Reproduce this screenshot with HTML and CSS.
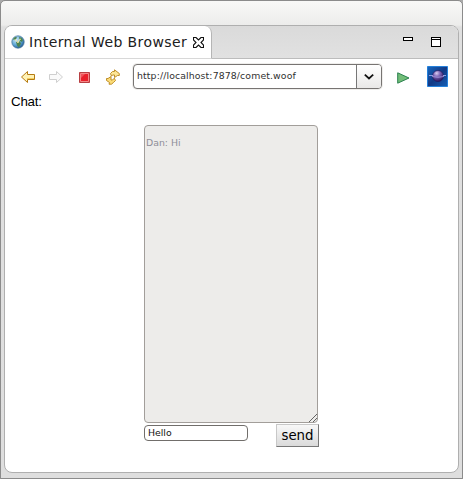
FILE: index.html
```html
<!DOCTYPE html>
<html lang="en">
<head>
<meta charset="utf-8">
<title>Internal Web Browser</title>
<link rel="stylesheet" href="styles.css">
</head>
<body>
<div class="window">
  <main class="panel">
    <header class="tabbar">
      <div class="tab">
        <svg class="globe" width="14" height="14" viewBox="0 0 14 14"><defs><radialGradient id="g" cx=".35" cy=".3" r=".75"><stop offset="0" stop-color="#d3ebf7"/><stop offset=".6" stop-color="#5ba5d4"/><stop offset="1" stop-color="#20578f"/></radialGradient></defs><circle cx="7" cy="7" r="6.200" fill="url(#g)" stroke="#47749a" stroke-width=".7"/><path d="M2 4l2-2 2 .3-1 2-2 1zM8 2l2.500.7L12 5l-1 2-2-1zM5 7l4-.5 1 2-2 4-2-2z" fill="#4d8452"/><path d="M3.500 4.500l2 1L7 8l1-3 2-1" fill="none" stroke="#f2e7a4" stroke-width=".9"/></svg>
        <span class="title">Internal Web Browser</span>
        <svg class="close" width="11" height="11" viewBox="0 0 11 11"><path d="M.5.5h2.500l2.500 2.500L8 .5h2.500v2.500L8 5.500l2.500 2.500v2.500H8L5.500 8 3 10.500H.5V8L3 5.500.5 3z" fill="#fff" stroke="#111" stroke-width="1.100"/></svg>
      </div>
      <div class="controls">
        <span class="minimize"></span>
        <span class="maximize"></span>
      </div>
    </header>
    <nav class="toolbar">
      <svg class="back" width="16" height="14" viewBox="0 0 16 14"><path d="M1.500 7L7.500 1.500V4.500H14.500V9.500H7.500V12.500z" fill="#fff2b5" stroke="#b57b12"/><path d="M7 8.500h7" stroke="#f5cf61"/></svg>
      <svg class="forward" width="16" height="14" viewBox="0 0 16 14"><path d="M14.500 7L8.500 1.500V4.500H1.500V9.500H8.500V12.500z" fill="#fafafa" stroke="#cfcfcf"/></svg>
      <svg class="stop" width="11" height="11" viewBox="0 0 11 11"><path d="M.5.5h10v10H.5z" fill="#e8202a" stroke="#b63f42"/><path d="M1.500 1.500h8v8h-8z" fill="none" stroke="#f48888"/><path d="M2 6l4-4H2z" fill="#ee555c"/></svg>
      <svg class="refresh" width="16" height="16" viewBox="0 0 16 16"><path d="M5.500 4.500L7.500 2.500H9.500V.8L14.300 4.500V6.500H12.500L9.500 8.500V6H7.500L6.500 7.200z" fill="#fde697" stroke="#b8841b" stroke-width=".9"/><path d="M10.500 11.500L8.500 13.500L6.500 15.200H4L4.500 13.500L1.500 11.500V9.500H3L6 7.500V11H7.500L9.300 9.200z" fill="#fbdc78" stroke="#b8841b" stroke-width=".9"/></svg>
      <div class="address"><span class="url">http://localhost:7878/comet.woof</span><span class="drop"><svg width="10" height="6" viewBox="0 0 10 6"><path d="M.8.7L5 4.500 9.200.7" fill="none" stroke="#111" stroke-width="1.8"/></svg></span></div>
      <svg class="go" width="13" height="12" viewBox="0 0 13 12"><path d="M.7.8L12 6 .7 11.200z" fill="#72bd78" stroke="#2c8250"/></svg>
      <svg class="logo" width="21" height="21" viewBox="0 0 21 21"><defs><linearGradient id="b" x1="0" y1="0" x2="1" y2="1"><stop offset="0" stop-color="#1769c0"/><stop offset=".5" stop-color="#123985"/><stop offset="1" stop-color="#1460b6"/></linearGradient><radialGradient id="p" cx=".38" cy=".25" r=".75"><stop offset="0" stop-color="#dacdf0"/><stop offset=".4" stop-color="#8068b8"/><stop offset="1" stop-color="#2b1760"/></radialGradient></defs><path d="M.5.5h20v20H.5z" fill="url(#b)" stroke="#2580da"/><circle cx="11" cy="10" r="5.500" fill="url(#p)" stroke="#241557" stroke-width=".6"/><path d="M2 9.500h4M16 9.500h3" stroke="#8e9ce0"/><path d="M5 10.500q6 1.500 12 0" fill="none" stroke="#a99be0" stroke-width=".8"/></svg>
    </nav>
    <section class="page">
      <div class="label">Chat:</div>
      <div class="chat">
        <div class="log">Dan: Hi<svg class="grip" width="8" height="8" viewBox="0 0 8 8"><path d="M0 8L8 0M4 8l4-4" stroke="#555" stroke-width=".9"/></svg></div>
        <div class="compose">
          <input class="message" type="text" value="Hello">
          <button class="send">send</button>
        </div>
      </div>
    </section>
  </main>
</div>
</body>
</html>
```
FILE: styles.css
```css
* { box-sizing: border-box; }
html { background: #aaa; }
body { margin: 0; font-family: "DejaVu Sans", sans-serif; overflow: hidden; }
svg { display: block; flex: none; }
.window {
  width: 463px; height: 479px;
  padding: 24px 3px 5px;
  border: 1px solid #8b8b8b;
  border-radius: 5px 5px 0 0;
  background: linear-gradient(#f8f8f7, #ececeb 24px, #e0e0e0 26px, #dedede);
}
.panel {
  height: 448px;
  border: 1px solid #afafaf;
  border-radius: 8px;
  background: #fff;
  overflow: hidden;
}
.tabbar {
  display: flex; justify-content: space-between;
  height: 33px;
  border-bottom: 1px solid #bcbcbc;
  background: linear-gradient(#dadada, #e1e1e1);
}
.tab {
  display: flex; align-items: center;
  width: 207px; height: 33px;
  padding-left: 6px;
  border-right: 1px solid #b5b5b5;
  border-bottom: 1px solid #d8d8d8;
  border-radius: 0 7px 0 0;
  background: #fff;
}
.title { width: 158px; margin: 0 6px 0 4px; font-size: 14px; letter-spacing: .4px; line-height: 18px; color: #202020; white-space: nowrap; }
.controls { display: flex; gap: 18px; padding: 11px 17px 0 0; }
.minimize { width: 10px; height: 4px; border: 1px solid #000; background: #fff; }
.maximize { width: 10px; height: 10px; border: 1px solid #000; background: linear-gradient(#fff 1px, #000 1px, #000 2px, #fff 2px); }
.toolbar { display: flex; align-items: center; height: 35px; padding: 1px 0 0 15px; }
.forward { margin-left: 12px; }
.stop { margin-left: 15px; }
.refresh { margin-left: 15px; }
.address {
  display: flex;
  width: 249px; height: 25px;
  margin: -1px 0 0 12px;
  border: 1px solid #777472;
  border-radius: 4px;
  box-shadow: 0 0 0 1px #efeeec;
  background: #fff;
  overflow: hidden;
}
.url { flex: 1; padding-left: 3px; font-size: 9.330px; letter-spacing: .12px; line-height: 22px; color: #303030; white-space: nowrap; }
.drop { display: flex; align-items: center; justify-content: center; width: 25px; border-left: 1px solid #777; background: linear-gradient(#fff, #e9e8e7); }
.go { margin: 1px 0 0 15px; }
.logo { margin: -1px 0 0 17px; }
.label { margin-left: 6px; font: 13.330px/16px "Liberation Sans", sans-serif; letter-spacing: -.25px; color: #000; }
.chat { width: 175px; margin: 15px 0 0 139px; }
.log {
  position: relative;
  width: 174px; height: 298px;
  padding: 11px 1px;
  border: 1px solid #a29e9a;
  border-radius: 4px;
  background: #edecea;
  font-size: 9.330px; line-height: 11px; color: #8e8e99;
}
.grip { position: absolute; right: 0; bottom: 0; }
.compose { display: flex; justify-content: space-between; align-items: flex-start; padding-top: 1px; }
.message {
  width: 104px; height: 16px;
  margin: 1px 0 0;
  padding: 0 3px 1px;
  border: 1px solid #716e6b;
  border-radius: 4px;
  background: #fff;
  font: 9.330px "DejaVu Sans", sans-serif; color: #111;
}
.send {
  width: 43px; height: 23px;
  padding: 0;
  border: 1px solid #c8c8c8;
  border-right-color: #777; border-bottom-color: #777;
  border-radius: 0;
  background: linear-gradient(#f8f8f8, #dadada);
  font: 13.330px/20px "DejaVu Sans", sans-serif; color: #000;
}
```
